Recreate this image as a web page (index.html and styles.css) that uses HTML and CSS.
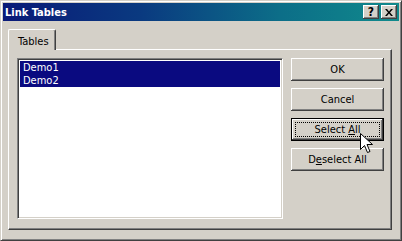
FILE: index.html
```html
<!DOCTYPE html>
<html lang="en">
<head>
    <meta charset="UTF-8">
    <title>Link Tables</title>
    <link rel="stylesheet" href="styles.css">
</head>
<body>
    <div class="window">
        <div class="titlebar">
            <span class="title">Link Tables</span>
            <div class="caption-buttons">
                <div class="cap-btn help">?</div>
                <div class="cap-btn close">
                    <svg width="8" height="7" viewBox="0 0 8 7">
                        <path d="M0 0h2l2 2.5L6 0h2L5 3.5 8 7H6L4 4.5 2 7H0l3-3.5z" fill="#000"/>
                    </svg>
                </div>
            </div>
        </div>
        <div class="client">
            <div class="tabs">
                <div class="tab active">Tables</div>
            </div>
            <div class="panel">
                <div class="listbox">
                    <div class="item selected">Demo1</div>
                    <div class="item selected">Demo2</div>
                </div>
                <div class="buttons">
                    <button class="btn">OK</button>
                    <button class="btn">Cancel</button>
                    <button class="btn default"><span class="focus">Select <u>A</u>ll</span></button>
                    <button class="btn">D<u>e</u>select All</button>
                </div>
            </div>
        </div>
        <svg class="cursor" width="13" height="21" viewBox="0 0 13 21">
            <path d="M0.5 0.5v16l4-4 3 7 2.5-1-3-7h5.5z" fill="#fff" stroke="#000" stroke-width="1"/>
        </svg>
    </div>
</body>
</html>
```

FILE: styles.css
```css
body {
    margin: 0;
    font-family: Tahoma, "DejaVu Sans Condensed", "Liberation Sans", sans-serif;
    font-size: 11px;
    color: #000;
}
.window {
    position: relative;
    width: 402px;
    height: 241px;
    box-sizing: border-box;
    background-color: #d4d0c8;
    border-top: 1px solid #d4d0c8;
    border-left: 1px solid #d4d0c8;
    border-right: 1px solid #404040;
    border-bottom: 1px solid #404040;
    box-shadow: inset 1px 1px #fff, inset -1px -1px #808080;
    padding: 2px;
    display: flex;
    flex-direction: column;
}
.titlebar {
    height: 18px;
    background: linear-gradient(to right, #0a1a78, #0a3a80 35%, #0c6e88 70%, #108a8c);
    display: flex;
    align-items: center;
    justify-content: space-between;
    padding-left: 2px;
}
.title {
    color: #fff;
    font-weight: bold;
}
.caption-buttons {
    display: flex;
    gap: 2px;
    margin-right: 2px;
}
.cap-btn {
    width: 16px;
    height: 14px;
    box-sizing: border-box;
    background-color: #d4d0c8;
    box-shadow: inset -1px -1px #404040, inset 1px 1px #fff, inset -2px -2px #808080;
    display: flex;
    align-items: center;
    justify-content: center;
    font-weight: bold;
    font-size: 12px;
    line-height: 1;
}
.client {
    flex: 1;
    display: flex;
    flex-direction: column;
    padding: 8px 7px 8px 5px;
}
.tabs {
    display: flex;
    height: 20px;
    position: relative;
    z-index: 1;
}
.tab {
    width: 48px;
    box-sizing: border-box;
    padding: 5px 0 0 9px;
    border-top: 1px solid #fff;
    border-left: 1px solid #fff;
    border-right: 1px solid #404040;
    border-radius: 2px 2px 0 0;
    box-shadow: inset -1px 0 #808080;
    background-color: #d4d0c8;
    margin-bottom: -1px;
}
.panel {
    flex: 1;
    display: flex;
    gap: 8px;
    padding: 8px 7px 10px 8px;
    border-top: 1px solid #fff;
    border-left: 1px solid #fff;
    border-right: 1px solid #404040;
    border-bottom: 1px solid #404040;
    box-shadow: inset -1px -1px #808080;
}
.listbox {
    width: 266px;
    box-sizing: border-box;
    background-color: #fff;
    border-top: 1px solid #808080;
    border-left: 1px solid #808080;
    border-right: 1px solid #fff;
    border-bottom: 1px solid #fff;
    box-shadow: inset 1px 1px #404040, inset -1px -1px #d4d0c8;
    padding: 2px 2px;
}
.item {
    height: 13px;
    line-height: 13px;
    padding-left: 3px;
}
.item.selected {
    background-color: #0a0a80;
    color: #fff;
}
.buttons {
    display: flex;
    flex-direction: column;
    gap: 7px;
}
.btn {
    width: 93px;
    height: 23px;
    box-sizing: border-box;
    font: inherit;
    color: #000;
    background-color: #d4d0c8;
    border: none;
    padding: 0;
    box-shadow: inset -1px -1px #404040, inset 1px 1px #fff, inset -2px -2px #808080;
    text-align: center;
}
.btn.default {
    border: 1px solid #000;
    padding: 3px;
}
.focus {
    display: block;
    height: 15px;
    line-height: 15px;
    text-align: center;
    outline: 1px dotted #000;
    outline-offset: -1px;
}
.cursor {
    position: absolute;
    left: 359px;
    top: 132px;
}
```
